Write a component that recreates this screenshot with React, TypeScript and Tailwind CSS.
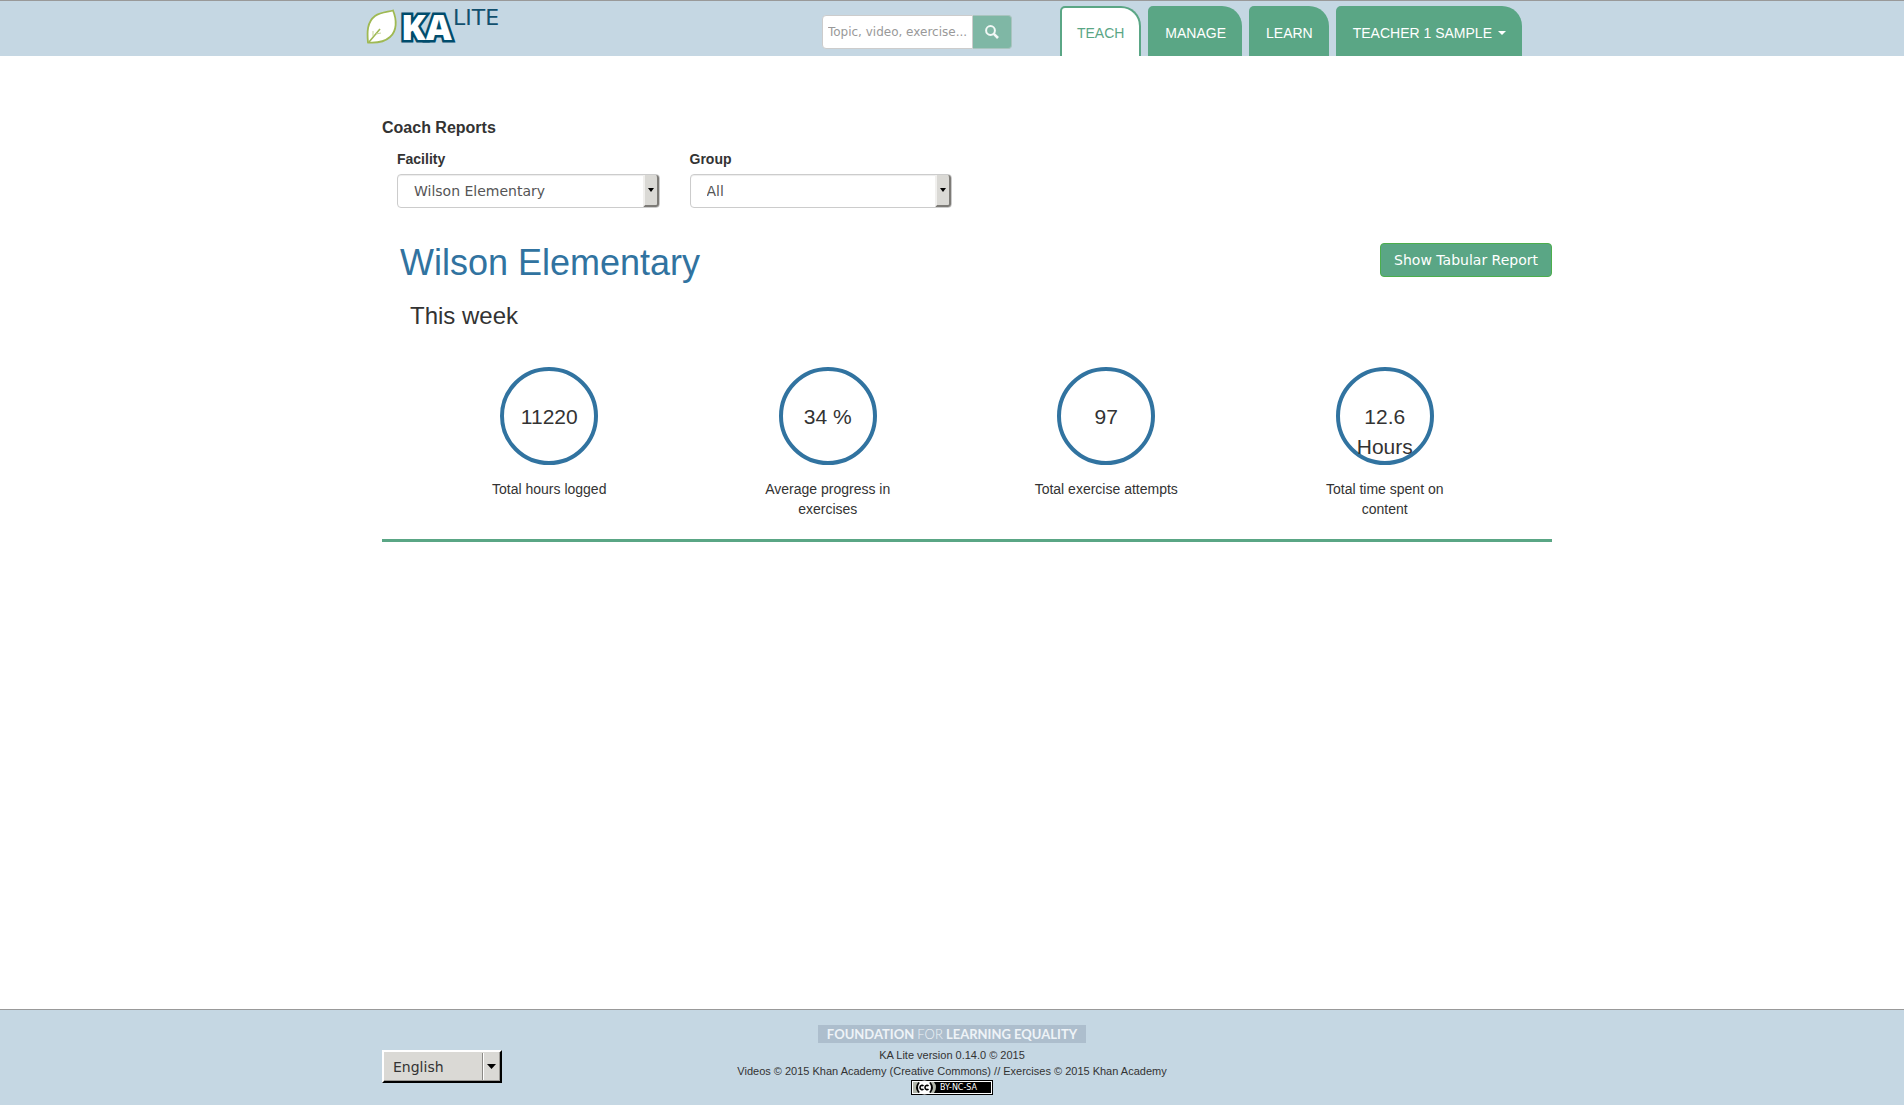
import React from "react";

const stats = [
  { value: "11220", label: "Total hours logged" },
  { value: "34 %", label: "Average progress in exercises" },
  { value: "97", label: "Total exercise attempts" },
  { value: "12.6 Hours", label: "Total time spent on content" },
];

function Logo() {
  return (
    <a href="#home" aria-label="KA Lite" className="block">
      <svg width="140" height="38" viewBox="0 0 140 38" className="block overflow-visible">
        <path
          d="M1 34.500C0 24 0 14 8 8C14 4 22 4 26 2.500C30 12 30 23 23 29C17 34.500 8 35 1 34.500Z"
          fill="#fff"
          stroke="#9fb953"
          strokeWidth="1.800"
        />
        <path d="M2 34L13 21" fill="none" stroke="#9fb953" strokeWidth="1.600" />
        <path d="M6 28V23M9 26L14 25" fill="none" stroke="#c6d69a" strokeWidth="1" />
        <text
          x="34"
          y="32"
          fontFamily="'Open Sans', sans-serif"
          fontWeight="800"
          fontSize="36"
          fill="#fff"
          stroke="#004c6c"
          strokeWidth="5"
          strokeLinejoin="miter"
          paintOrder="stroke"
        >
          KA
        </text>
        <text
          x="86"
          y="17"
          fontFamily="'DejaVu Sans', sans-serif"
          fontSize="22"
          fill="#12506e"
        >
          LITE
        </text>
      </svg>
    </a>
  );
}

function Tab({ children, active = false }: { children: React.ReactNode; active?: boolean }) {
  return (
    <a
      href="#tab"
      className={
        active
          ? "flex h-[50px] items-center rounded-tl-[5px] rounded-tr-[20px] border-2 border-b-0 border-[#5aa685] bg-white px-[15px] pt-0.5 text-[#5aa685]"
          : "flex h-[50px] items-center rounded-tl-[5px] rounded-tr-[20px] bg-[#5aa685] pt-1 pr-4 pl-[17px] text-white"
      }
    >
      {children}
    </a>
  );
}

function Field({ id, label, value }: { id: string; label: string; value: string }) {
  return (
    <div className="w-1/4 px-[15px]">
      <label htmlFor={id} className="mb-[5px] block font-bold">
        {label}
      </label>
      <div className="relative">
        <select
          id={id}
          className="block h-[34px] w-full appearance-none rounded-[4px] border border-[#ccc] bg-white pr-6 pl-4 font-['DejaVu_Sans',sans-serif] text-[14px] text-[#555] shadow-[inset_0_1px_1px_rgba(0,0,0,0.075)]"
        >
          <option>{value}</option>
        </select>
        <span className="pointer-events-none absolute inset-y-px right-px flex w-4 items-center justify-center rounded-r-[3px] border-r-2 border-b-2 border-l-2 border-r-[#7d7b77] border-b-[#7d7b77] border-l-[#f1f0ee] bg-[#dad9d5]">
          <svg width="6" height="4" viewBox="0 0 6 4">
            <path d="M0 0H6L3 4Z" fill="#000" />
          </svg>
        </span>
      </div>
    </div>
  );
}

export default function App() {
  return (
    <div className="flex min-h-screen flex-col bg-white font-['Liberation_Sans',Arial,sans-serif] text-[14px] leading-[20px] text-[#333]">
      <header className="border-t border-[#999] bg-[#c5d7e3]">
        <div className="mx-auto flex h-[55px] w-full max-w-[1170px] items-start pr-[15px]">
          <div className="pt-[7px]">
            <Logo />
          </div>
          <form className="mt-[14px] ml-auto flex" onSubmit={(e) => e.preventDefault()}>
            <input
              type="text"
              aria-label="Search"
              placeholder="Topic, video, exercise..."
              className="h-[34px] w-[151px] rounded-l-[4px] border border-[#ccc] bg-white px-[5px] font-['DejaVu_Sans',sans-serif] text-[12px] text-[#555] placeholder:text-[#999]"
            />
            <button
              type="submit"
              aria-label="Search"
              className="flex h-[34px] w-[39px] items-center justify-center rounded-r-[4px] border border-l-0 border-[#a9c4bf] bg-[#7fb7a5] text-[#f2f8f6]"
            >
              <svg width="14" height="14" viewBox="0 0 14 14" fill="none" stroke="currentColor">
                <circle cx="5.500" cy="5.500" r="4.400" strokeWidth="2" />
                <path d="M8.800 8.800L13 13" strokeWidth="2.600" />
              </svg>
            </button>
          </form>
          <nav className="mt-[5px] ml-12 flex gap-[7px]">
            <Tab active>TEACH</Tab>
            <Tab>MANAGE</Tab>
            <Tab>LEARN</Tab>
            <Tab>
              TEACHER 1 SAMPLE
              <svg width="8" height="4" viewBox="0 0 8 4" className="ml-[6px]">
                <path d="M0 0H8L4 4Z" fill="currentColor" />
              </svg>
            </Tab>
          </nav>
        </div>
      </header>

      <main className="mx-auto w-full max-w-[1200px] grow pt-[62px] pl-[30px]">
        <h4 className="text-[16px] font-bold">Coach Reports</h4>
        <div className="mt-[11px] flex">
          <Field id="facility" label="Facility" value="Wilson Elementary" />
          <Field id="group" label="Group" value="All" />
        </div>

        <div className="mt-[35px] flex items-start justify-between">
          <h1 className="pl-[18px] text-[36px] leading-[40px] text-[#3173a0]">Wilson Elementary</h1>
          <button
            type="button"
            className="h-[34px] rounded-[4px] border border-[#4cae4c] bg-[#5aa685] px-[13px] font-['DejaVu_Sans',sans-serif] text-white"
          >
            Show Tabular Report
          </button>
        </div>

        <h3 className="mt-5 pl-7 text-[24px] leading-[26px]">This week</h3>

        <section className="mt-[38px] flex h-[175px] border-b-[3px] border-[#5aa685] px-7">
          {stats.map((s) => (
            <div key={s.label} className="flex flex-1 flex-col items-center text-center">
              <div className="h-[98px] w-[98px] shrink-0 rounded-full border-4 border-[#3173a0] px-3 pt-[31px] text-[21px] leading-[30px]">
                {s.value}
              </div>
              <p className="mt-[14px] w-40">{s.label}</p>
            </div>
          ))}
        </section>
      </main>

      <footer className="border-t border-[#999] bg-[#c5d7e3]">
        <div className="mx-auto grid h-[95px] w-full max-w-[1140px] grid-cols-[1fr_auto_1fr]">
          <div className="relative mt-10 h-[33px] w-[120px]">
            <select
              aria-label="Language"
              className="block h-full w-full appearance-none rounded-none border-2 border-t-white border-r-black border-b-black border-l-white bg-[#dad9d5] pl-[9px] font-['DejaVu_Sans',sans-serif] text-[14px] text-[#333] shadow-[inset_-1px_-1px_0_#9b9995]"
            >
              <option>English</option>
            </select>
            <span className="pointer-events-none absolute top-[3px] right-[3px] bottom-[3px] flex w-[17px] items-center justify-center border-l border-[#8b8985] shadow-[inset_1px_0_0_#fff]">
              <svg width="9" height="5" viewBox="0 0 9 5">
                <path d="M0 0H9L4.500 5Z" fill="#000" />
              </svg>
            </span>
          </div>
          <div className="flex flex-col items-center pt-[15px] text-[11px] leading-[16px]">
            <a
              href="#foundation"
              className="mb-1 flex h-[18px] w-[268px] items-center justify-center bg-[#adbecd] font-['Lato',sans-serif] text-[13px] font-bold whitespace-pre text-[#eef3f7]"
            >
              FOUNDATION <span className="font-light">FOR</span> LEARNING EQUALITY
            </a>
            <p>KA Lite version 0.14.0 © 2015</p>
            <p>Videos © 2015 Khan Academy (Creative Commons) // Exercises © 2015 Khan Academy</p>
            <a href="#license" aria-label="Creative Commons BY-NC-SA" className="mt-px block">
              <svg width="82" height="15" viewBox="0 0 82 15" className="block">
                <rect width="82" height="15" fill="#000" />
                <rect x="1" y="1" width="80" height="13" fill="#fff" />
                <rect x="2" y="2" width="78" height="11" fill="#000" />
                <path d="M2 2H23Q27 7 23 13H2Z" fill="#b1b6ab" />
                <circle cx="13.500" cy="7.500" r="7" fill="#fff" />
                <path d="M8 2.500Q4 7.500 8 12.500M19 2.500Q23 7.500 19 12.500" fill="none" stroke="#000" strokeWidth="1.800" />
                <path
                  d="M12.500 6Q11.500 5 10.300 5.500Q9 6 9 7.500T10.300 9.500Q11.500 10 12.500 9M17.500 6Q16.500 5 15.300 5.500Q14 6 14 7.500T15.300 9.500Q16.500 10 17.500 9"
                  fill="none"
                  stroke="#000"
                  strokeWidth="1.600"
                />
                <text x="29" y="10" fill="#fff" fontFamily="'DejaVu Sans', sans-serif" fontSize="8">
                  BY-NC-SA
                </text>
              </svg>
            </a>
          </div>
        </div>
      </footer>
    </div>
  );
}
